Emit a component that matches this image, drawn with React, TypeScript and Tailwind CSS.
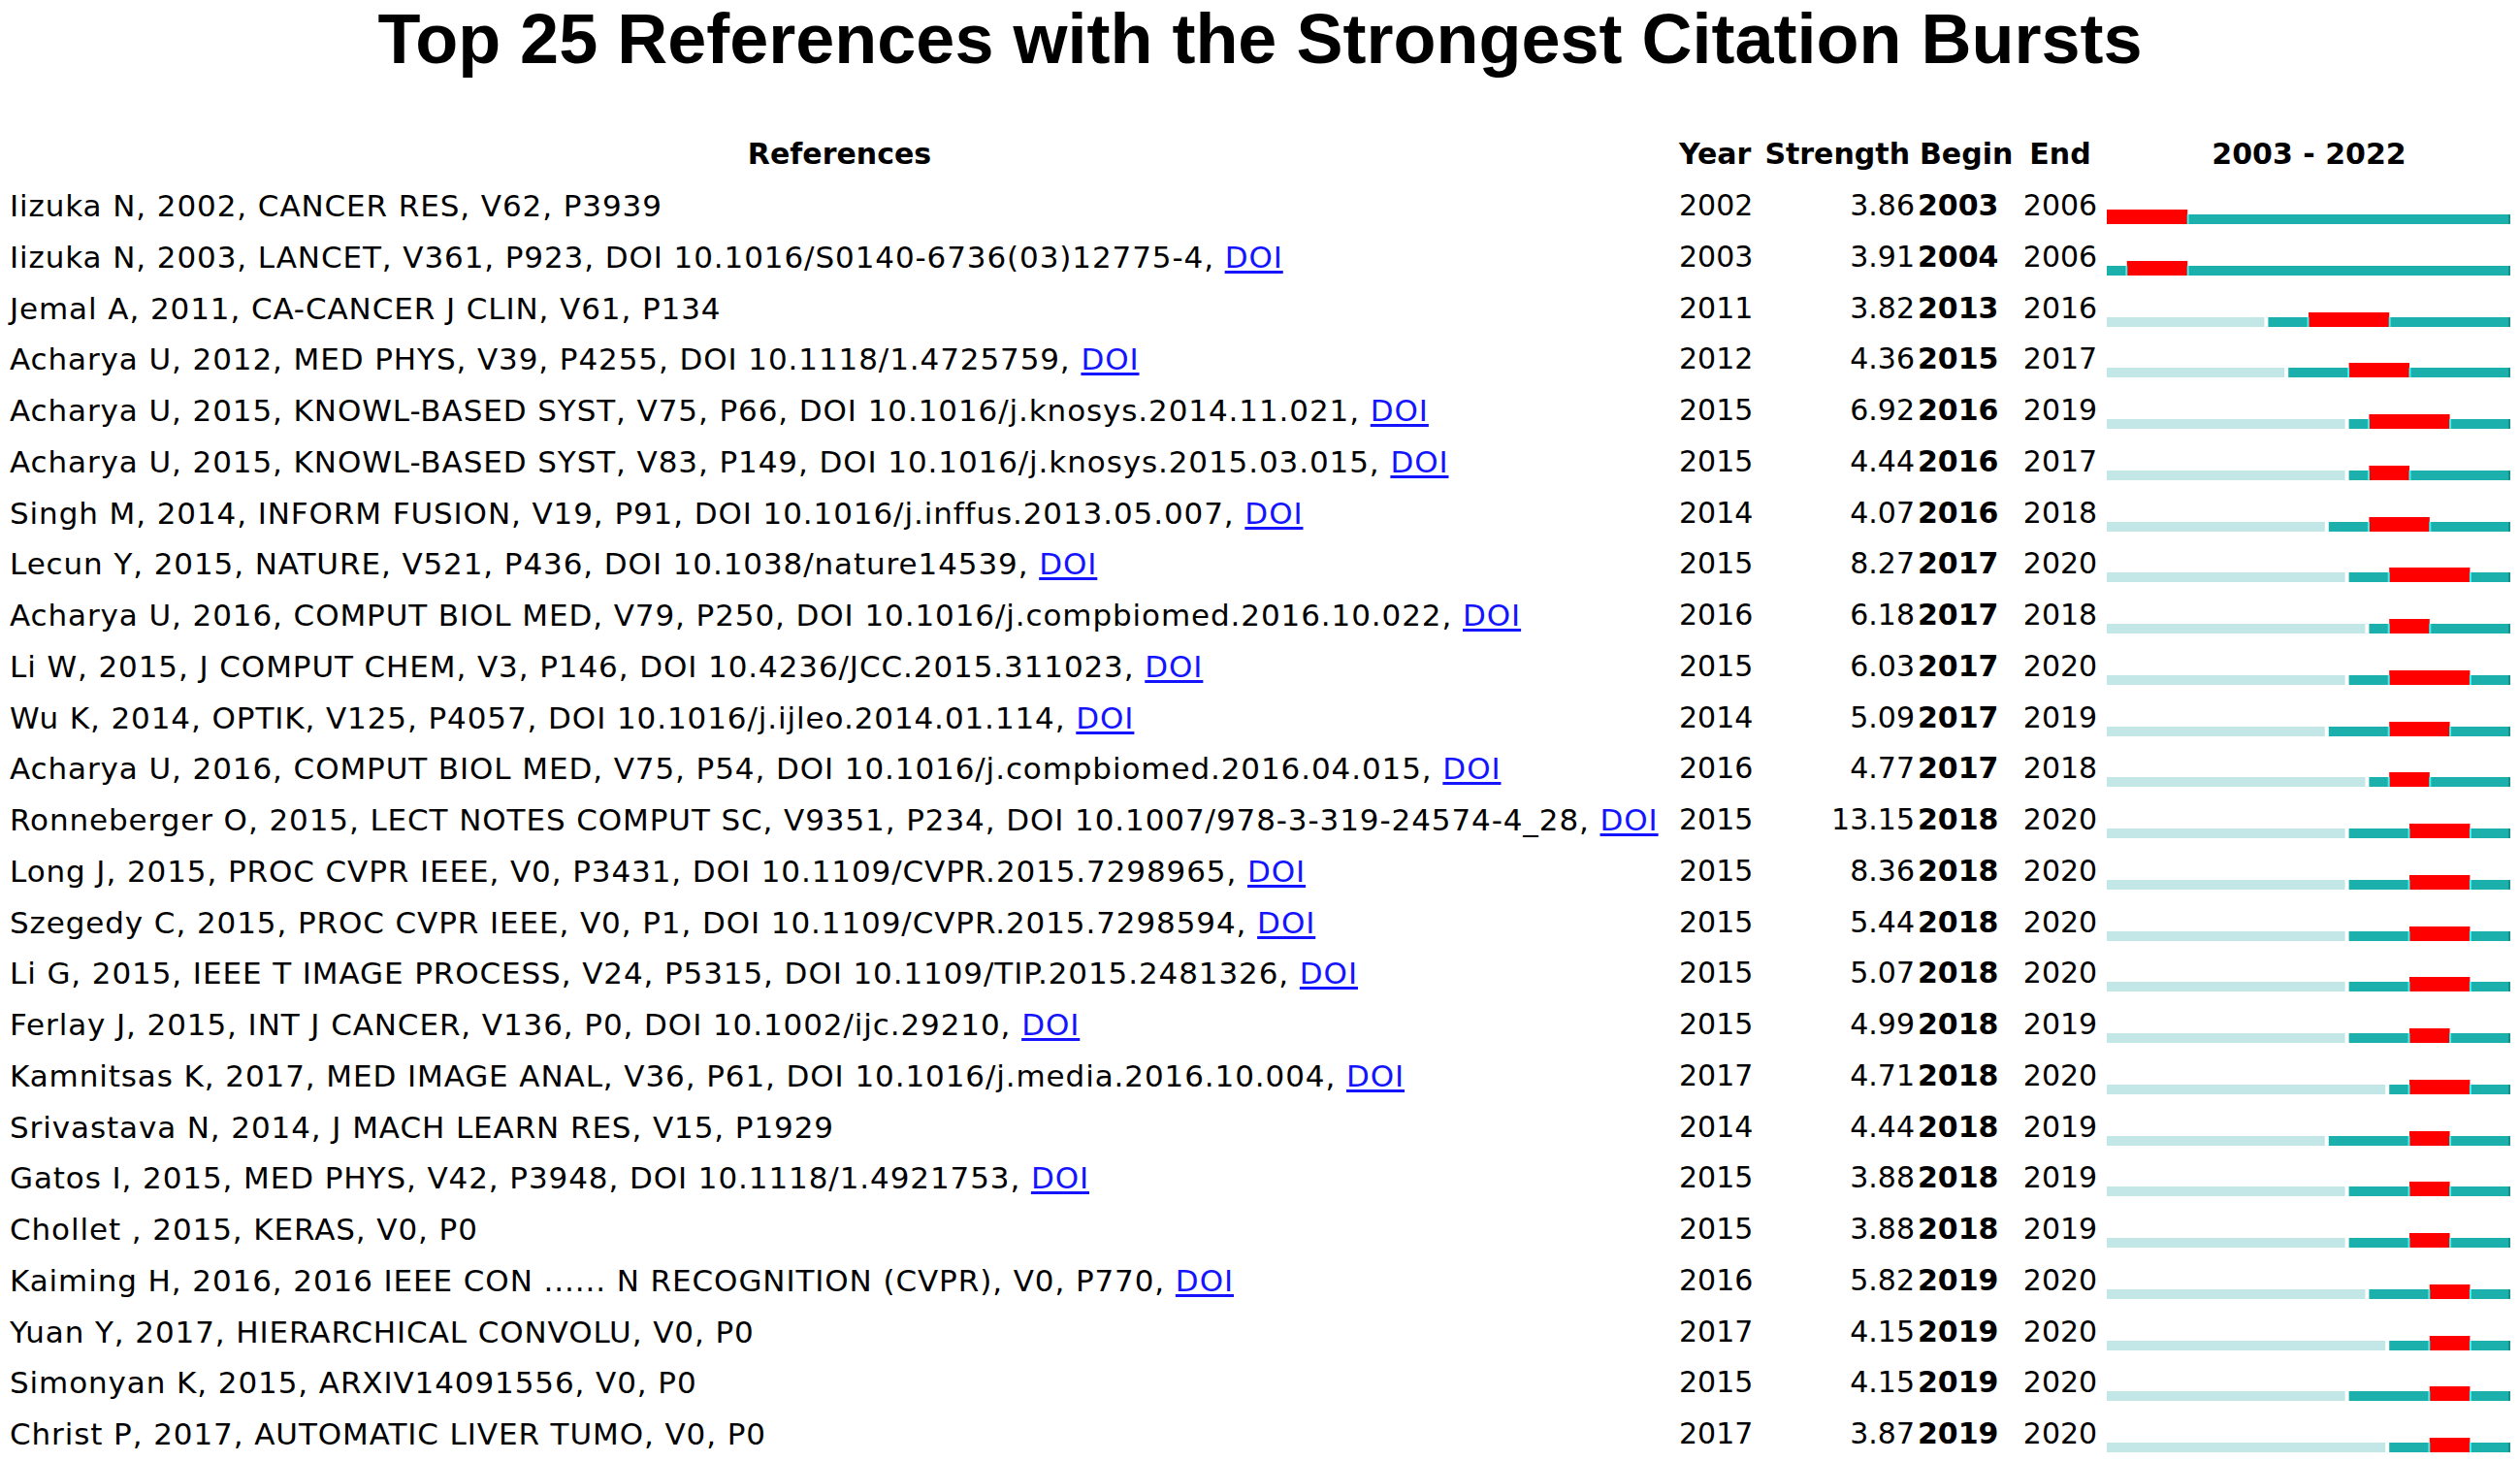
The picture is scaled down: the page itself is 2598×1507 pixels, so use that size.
import React from "react";

type Row = {
  text: string;
  doi: boolean;
  year: number;
  strength: string;
  begin: number;
  end: number;
};

const rows: Row[] = [
  { text: "Iizuka N, 2002, CANCER RES, V62, P3939", doi: false, year: 2002, strength: "3.86", begin: 2003, end: 2006 },
  { text: "Iizuka N, 2003, LANCET, V361, P923, DOI 10.1016/S0140-6736(03)12775-4, ", doi: true, year: 2003, strength: "3.91", begin: 2004, end: 2006 },
  { text: "Jemal A, 2011, CA-CANCER J CLIN, V61, P134", doi: false, year: 2011, strength: "3.82", begin: 2013, end: 2016 },
  { text: "Acharya U, 2012, MED PHYS, V39, P4255, DOI 10.1118/1.4725759, ", doi: true, year: 2012, strength: "4.36", begin: 2015, end: 2017 },
  { text: "Acharya U, 2015, KNOWL-BASED SYST, V75, P66, DOI 10.1016/j.knosys.2014.11.021, ", doi: true, year: 2015, strength: "6.92", begin: 2016, end: 2019 },
  { text: "Acharya U, 2015, KNOWL-BASED SYST, V83, P149, DOI 10.1016/j.knosys.2015.03.015, ", doi: true, year: 2015, strength: "4.44", begin: 2016, end: 2017 },
  { text: "Singh M, 2014, INFORM FUSION, V19, P91, DOI 10.1016/j.inffus.2013.05.007, ", doi: true, year: 2014, strength: "4.07", begin: 2016, end: 2018 },
  { text: "Lecun Y, 2015, NATURE, V521, P436, DOI 10.1038/nature14539, ", doi: true, year: 2015, strength: "8.27", begin: 2017, end: 2020 },
  { text: "Acharya U, 2016, COMPUT BIOL MED, V79, P250, DOI 10.1016/j.compbiomed.2016.10.022, ", doi: true, year: 2016, strength: "6.18", begin: 2017, end: 2018 },
  { text: "Li W, 2015, J COMPUT CHEM, V3, P146, DOI 10.4236/JCC.2015.311023, ", doi: true, year: 2015, strength: "6.03", begin: 2017, end: 2020 },
  { text: "Wu K, 2014, OPTIK, V125, P4057, DOI 10.1016/j.ijleo.2014.01.114, ", doi: true, year: 2014, strength: "5.09", begin: 2017, end: 2019 },
  { text: "Acharya U, 2016, COMPUT BIOL MED, V75, P54, DOI 10.1016/j.compbiomed.2016.04.015, ", doi: true, year: 2016, strength: "4.77", begin: 2017, end: 2018 },
  { text: "Ronneberger O, 2015, LECT NOTES COMPUT SC, V9351, P234, DOI 10.1007/978-3-319-24574-4_28, ", doi: true, year: 2015, strength: "13.15", begin: 2018, end: 2020 },
  { text: "Long J, 2015, PROC CVPR IEEE, V0, P3431, DOI 10.1109/CVPR.2015.7298965, ", doi: true, year: 2015, strength: "8.36", begin: 2018, end: 2020 },
  { text: "Szegedy C, 2015, PROC CVPR IEEE, V0, P1, DOI 10.1109/CVPR.2015.7298594, ", doi: true, year: 2015, strength: "5.44", begin: 2018, end: 2020 },
  { text: "Li G, 2015, IEEE T IMAGE PROCESS, V24, P5315, DOI 10.1109/TIP.2015.2481326, ", doi: true, year: 2015, strength: "5.07", begin: 2018, end: 2020 },
  { text: "Ferlay J, 2015, INT J CANCER, V136, P0, DOI 10.1002/ijc.29210, ", doi: true, year: 2015, strength: "4.99", begin: 2018, end: 2019 },
  { text: "Kamnitsas K, 2017, MED IMAGE ANAL, V36, P61, DOI 10.1016/j.media.2016.10.004, ", doi: true, year: 2017, strength: "4.71", begin: 2018, end: 2020 },
  { text: "Srivastava N, 2014, J MACH LEARN RES, V15, P1929", doi: false, year: 2014, strength: "4.44", begin: 2018, end: 2019 },
  { text: "Gatos I, 2015, MED PHYS, V42, P3948, DOI 10.1118/1.4921753, ", doi: true, year: 2015, strength: "3.88", begin: 2018, end: 2019 },
  { text: "Chollet , 2015, KERAS, V0, P0", doi: false, year: 2015, strength: "3.88", begin: 2018, end: 2019 },
  { text: "Kaiming H, 2016, 2016 IEEE CON ...... N RECOGNITION (CVPR), V0, P770, ", doi: true, year: 2016, strength: "5.82", begin: 2019, end: 2020 },
  { text: "Yuan Y, 2017, HIERARCHICAL CONVOLU, V0, P0", doi: false, year: 2017, strength: "4.15", begin: 2019, end: 2020 },
  { text: "Simonyan K, 2015, ARXIV14091556, V0, P0", doi: false, year: 2015, strength: "4.15", begin: 2019, end: 2020 },
  { text: "Christ P, 2017, AUTOMATIC LIVER TUMO, V0, P0", doi: false, year: 2017, strength: "3.87", begin: 2019, end: 2020 },
];

const START = 2003;
const YEARS = 20;
const TRACK = 416;
const STEP = TRACK / YEARS;

// one timeline bar: light before publication, teal after, red burst on top
const BurstBar = ({ year, begin, end }: { year: number; begin: number; end: number }) => {
  const s = Math.max(0, (year - START) * STEP);
  const b = (begin - START) * STEP;
  const e = (end - START + 1) * STEP;
  return (
    <svg width={418} height={16} className="block">
      {s > 0 && <rect x={0} y={5} width={s - 4} height={10} fill="#c3e6e6" />}
      <rect x={s} y={5} width={TRACK - s} height={10} fill="#1bb0ab" />
      <rect x={TRACK - 2} y={5} width={2} height={10} fill="#12928e" />
      <rect x={b} y={0} width={e - b} height={15} fill="#ff0000" />
      {b > 0 && <rect x={b - 1.5} y={5} width={2} height={10} fill="#3ef2f2" />}
      <rect x={e - 0.5} y={5} width={2} height={10} fill="#3ef2f2" />
    </svg>
  );
};

export default function App() {
  return (
    <div className="w-[2598px] min-h-[1507px] bg-white text-black font-['DejaVu_Sans',sans-serif]">
      <h1 className="text-center text-[72px] leading-[80px] font-bold font-['Liberation_Sans',sans-serif]">
        Top 25 References with the Strongest Citation Bursts
      </h1>

      <div className="mt-[51px] text-[30px]">
        <div className="flex h-[50px] leading-[56px] font-bold whitespace-nowrap">
          <div className="w-[1731px] text-center">References</div>
          <div className="w-[80px]">Year</div>
          <div className="w-[163px] text-right pr-[5px]">Strength</div>
          <div className="w-[106px] pl-[5px]">Begin</div>
          <div className="w-[88px] text-center">End</div>
          <div className="w-[421px] pl-[4px] text-center">2003 - 2022</div>
        </div>

        {rows.map((r, i) => (
          <div key={i} className="flex items-start h-[52.75px] leading-[62.75px] whitespace-nowrap">
            <div className="w-[1731px] pl-[10px] text-[31px] tracking-[0.9px]">
              {r.text}
              {r.doi && <a href="#" className="text-[#1414ff] underline underline-offset-[3px]">DOI</a>}
            </div>
            <div className="w-[80px]">{r.year}</div>
            <div className="w-[163px] text-right">{r.strength}</div>
            <div className="w-[106px] pl-[3px] font-bold">{r.begin}</div>
            <div className="w-[88px] text-center">{r.end}</div>
            <div className="w-[421px] pl-[4px] pt-[35px]">
              <BurstBar year={r.year} begin={r.begin} end={r.end} />
            </div>
          </div>
        ))}
      </div>
    </div>
  );
}
